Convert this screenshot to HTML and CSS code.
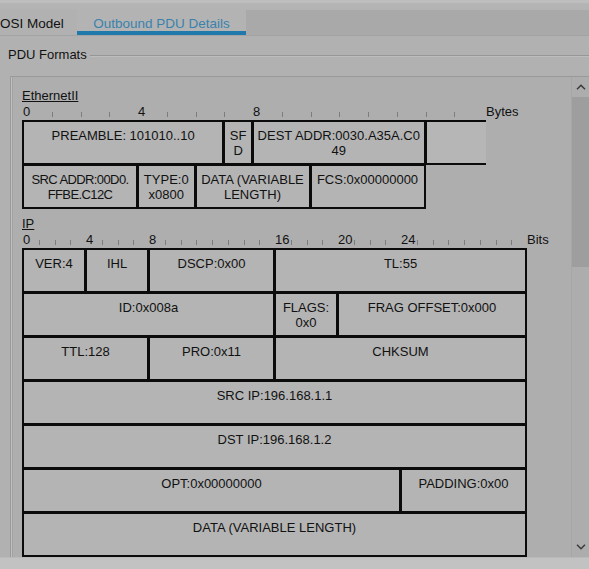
FILE: index.html
```html
<!DOCTYPE html>
<html>
<head>
<meta charset="utf-8">
<title>PDU Information</title>
<link rel="stylesheet" href="styles.css">
</head>
<body>
<div class="window">
  <div class="topband"></div>
  <div class="tabs">
    <div class="tab">OSI Model</div>
    <div class="tab active">Outbound PDU Details</div>
    <div class="tabfill"></div>
  </div>
  <div class="legend"><span class="legend-text">PDU Formats</span><span class="legend-rule"></span></div>
  <div class="scrollbox">
    <div class="content">
      <section class="proto">
        <div class="pname">EthernetII</div>
        <div class="grid eth">
          <span class="num">0</span><span class="tick"></span><span class="tick"></span><span class="tick"></span>
          <span class="num">4</span><span class="tick"></span><span class="tick"></span><span class="tick"></span>
          <span class="num">8</span><span class="tick"></span><span class="tick"></span><span class="tick"></span>
          <span class="tick"></span><span class="tick"></span><span class="tick"></span><span class="tick"></span>
          <span class="unit bytes">Bytes</span>

          <div class="c s7">PREAMBLE: 101010..10</div>
          <div class="c s1">SF<br>D</div>
          <div class="c s6">DEST ADDR:0030.A35A.C0<br>49</div>
          <div class="c s2 open"></div>

          <div class="c s4 tight">SRC ADDR:00D0.<br>FFBE.C12C</div>
          <div class="c s2">TYPE:0<br>x0800</div>
          <div class="c s4">DATA (VARIABLE<br>LENGTH)</div>
          <div class="c s4">FCS:0x00000000</div>
        </div>
      </section>

      <section class="proto ip">
        <div class="pname">IP</div>
        <div class="grid ipg">
          <span class="num">0</span><span class="tick"></span><span class="tick"></span><span class="tick"></span>
          <span class="num">4</span><span class="tick"></span><span class="tick"></span><span class="tick"></span>
          <span class="num">8</span><span class="tick"></span><span class="tick"></span><span class="tick"></span>
          <span class="tick"></span><span class="tick"></span><span class="tick"></span><span class="tick"></span>
          <span class="num">16</span><span class="tick"></span><span class="tick"></span><span class="tick"></span>
          <span class="num">20</span><span class="tick"></span><span class="tick"></span><span class="tick"></span>
          <span class="num">24</span><span class="tick"></span><span class="tick"></span><span class="tick"></span>
          <span class="tick"></span><span class="tick"></span><span class="tick"></span><span class="tick"></span>
          <span class="unit bits">Bits</span>

          <div class="c s4">VER:4</div>
          <div class="c s4">IHL</div>
          <div class="c s8">DSCP:0x00</div>
          <div class="c s16">TL:55</div>

          <div class="c s16">ID:0x008a</div>
          <div class="c s4">FLAGS:<br>0x0</div>
          <div class="c s12">FRAG OFFSET:0x000</div>

          <div class="c s8">TTL:128</div>
          <div class="c s8">PRO:0x11</div>
          <div class="c s16">CHKSUM</div>

          <div class="c s32">SRC IP:196.168.1.1</div>
          <div class="c s32">DST IP:196.168.1.2</div>

          <div class="c s24">OPT:0x00000000</div>
          <div class="c s8">PADDING:0x00</div>

          <div class="c s32">DATA (VARIABLE LENGTH)</div>
        </div>
      </section>
    </div>
    <div class="scrollbar">
      <div class="arrow up"><svg width="10" height="6" viewBox="0 0 10 6"><path d="M1 5.2 L5 1.2 L9 5.2" fill="none" stroke="#3a3a3a" stroke-width="1.5"/></svg></div>
      <div class="track"><div class="thumb"></div></div>
      <div class="arrow down"><svg width="10" height="6" viewBox="0 0 10 6"><path d="M1 0.8 L5 4.8 L9 0.8" fill="none" stroke="#3a3a3a" stroke-width="1.5"/></svg></div>
    </div>
  </div>
  <div class="bottomband"></div>
</div>
</body>
</html>
```

FILE: styles.css
```css
* { box-sizing: border-box; }

html, body {
  margin: 0;
  padding: 0;
}

body {
  width: 589px;
  height: 569px;
  overflow: hidden;
  background: #b1b1b1;
  font-family: "Liberation Sans", Arial, sans-serif;
  font-size: 13px;
  color: #111;
}

.window {
  display: flex;
  flex-direction: column;
  height: 569px;
}

.topband {
  height: 10px;
  background: linear-gradient(#bebebe 0, #bebebe 3px, #b5b5b5 3px, #b3b3b3 100%);
}

.tabs {
  display: flex;
  height: 26px;
  background: #a9a9a9;
  border-bottom: 1px solid #a3a3a3;
}

.tab {
  font-size: 13.5px;
  line-height: 16px;
  padding-top: 6px;
  background: #b1b1b1;
  white-space: nowrap;
}

.tab:first-child {
  width: 77px;
  padding-left: 0;
}

.tab.active {
  width: 169px;
  text-align: center;
  color: #3a82ad;
  border-bottom: 4px solid #1f7aab;
  background: #b3b3b3;
}

.tabfill { flex: 1; }

.legend {
  display: flex;
  align-items: center;
  height: 16px;
  margin-top: 11px;
  padding-left: 8px;
}

.legend-text {
  line-height: 16px;
  white-space: nowrap;
  margin-right: 3px;
}

.legend-rule {
  flex: 1;
  height: 1px;
  margin-top: 1px;
  background: #979797;
  box-shadow: 0 1px 0 #bdbdbd;
}

.scrollbox {
  display: flex;
  height: 481px;
  margin-top: 13px;
  margin-left: 10px;
  border-top: 1px solid #999;
  border-left: 1px solid #999;
  box-shadow: inset 1px 0 0 #c0c0c0, inset 2px 0 0 #a2a2a2;
  background: #aeaeae;
  overflow: hidden;
}

.content {
  flex: 1;
  padding: 11px 0 0 11px;
  overflow: hidden;
}

.pname {
  line-height: 15px;
  height: 15px;
  text-decoration: underline;
  text-underline-offset: 1px;
}

.proto.ip { margin-top: 8px; }

.grid {
  display: grid;
  grid-auto-rows: 44px;
}

.eth {
  grid-template-columns: repeat(16, 28.75px) auto;
  grid-template-rows: 17px;
}

.ipg {
  grid-template-columns: repeat(32, 15.75px) auto;
  grid-template-rows: 17px;
}

.num, .unit {
  line-height: 15px;
  padding-top: 1px;
  padding-left: 1px;
  white-space: nowrap;
}

.bytes { padding-left: 4px; }
.bits { padding-left: 1px; }

.tick {
  justify-self: start;
  width: 1px;
  height: 5px;
  margin-top: 9px;
  margin-left: 1px;
  background: #7c7c7c;
}

.c {
  border: 2px solid #0b0b0b;
  margin: 0 -1px -1px 0;
  background: #b4b4b4;
  text-align: center;
  padding: 6px 2px 0;
  line-height: 15px;
  white-space: nowrap;
  overflow: hidden;
}

.c.open {
  border-right: none;
  margin-right: -4px;
  background: #b6b6b6;
}

.tight { letter-spacing: -0.6px; }

.s1 { grid-column: span 1; }
.s2 { grid-column: span 2; }
.s4 { grid-column: span 4; }
.s6 { grid-column: span 6; }
.s7 { grid-column: span 7; }
.s8 { grid-column: span 8; }
.s12 { grid-column: span 12; }
.s16 { grid-column: span 16; }
.s24 { grid-column: span 24; }
.s32 { grid-column: span 32; }

.scrollbar {
  width: 18px;
  flex: none;
  display: flex;
  flex-direction: column;
  background: #adadad;
  border-left: 1px solid #a6a6a6;
}

.arrow {
  height: 20px;
  display: flex;
  align-items: center;
  justify-content: center;
}

.track {
  flex: 1;
}

.thumb {
  height: 170px;
  background: #9e9e9e;
}

.bottomband {
  flex: 1;
  background: #c2c2c2;
  border-top: 1px solid #b9b9b9;
}
```
